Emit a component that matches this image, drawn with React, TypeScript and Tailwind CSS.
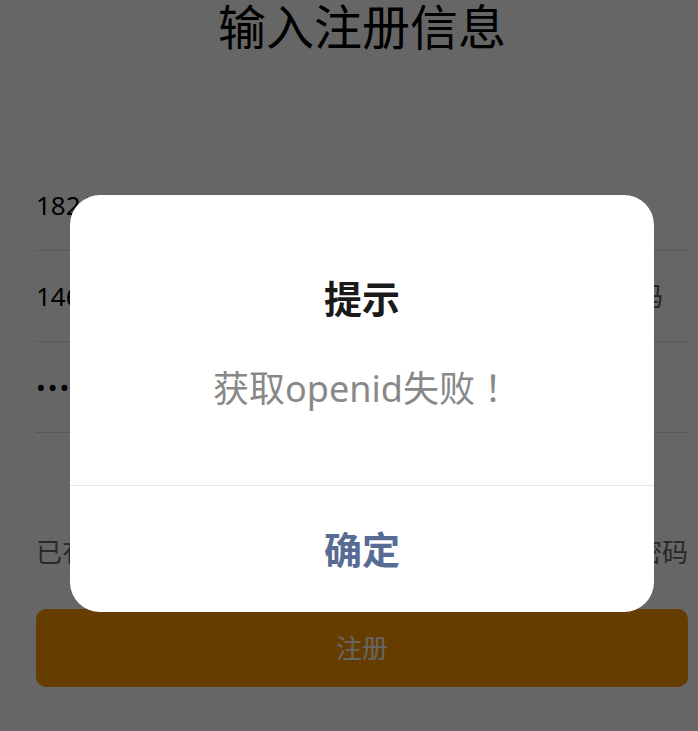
import React from 'react'

const font = { fontFamily: '"Noto Sans", "Noto Sans CJK SC", sans-serif' }

function Row({ value, extra, dots }: { value: string; extra?: string; dots?: boolean }) {
  return (
    <div className="h-[91px] border-b border-[#dcdcdc] flex items-center justify-between">
      <span className={dots ? 'text-[26px] tracking-[2px] text-black' : 'text-[26px] text-black'}>{value}</span>
      {extra && <span className="text-[26px] text-[#555] pr-[25px]">{extra}</span>}
    </div>
  )
}

export default function App() {
  return (
    <div className="w-[698px] h-[731px] overflow-hidden bg-white" style={font}>
      <div className="relative w-[724px] h-[731px] px-[36px]">
        <h1 className="text-[48px] leading-[54px] text-black text-center">输入注册信息</h1>

        <div className="mt-[106px]">
          <Row value="18212345678" />
          <Row value="146523" extra="获取验证码" />
          <Row value="••••••" dots />
        </div>

        <div className="mt-[101px] flex justify-between text-[26px] text-[#666] leading-[36px]">
          <span>已有账号？立即登录</span>
          <span>忘记密码</span>
        </div>

        <button className="mt-[39px] w-full h-[78px] rounded-[10px] bg-[#ff9900] text-white text-[26px] flex items-center justify-center">
          注册
        </button>

        <div className="absolute inset-0 bg-black/60 flex justify-center">
          <div className="mt-[195px] w-[584px] h-[417px] bg-white rounded-[30px] flex flex-col overflow-hidden">
            <div className="h-[291px] flex flex-col items-center border-b border-[#e5e5e5]">
              <div className="mt-[79px] text-[38px] font-bold leading-[48px] text-[#1a1a1a]">提示</div>
              <div className="mt-[40px] text-[36px] leading-[48px] text-[#888] [text-spacing-trim:space-all]">
                获取openid失败
                <span className="inline-block w-[36px] text-center" style={{ fontFamily: '"Noto Sans CJK TC", sans-serif' }}>！</span>
              </div>
            </div>
            <div className="flex-1 flex items-center justify-center text-[38px] font-bold text-[#576b95]">
              确定
            </div>
          </div>
        </div>
      </div>
    </div>
  )
}
